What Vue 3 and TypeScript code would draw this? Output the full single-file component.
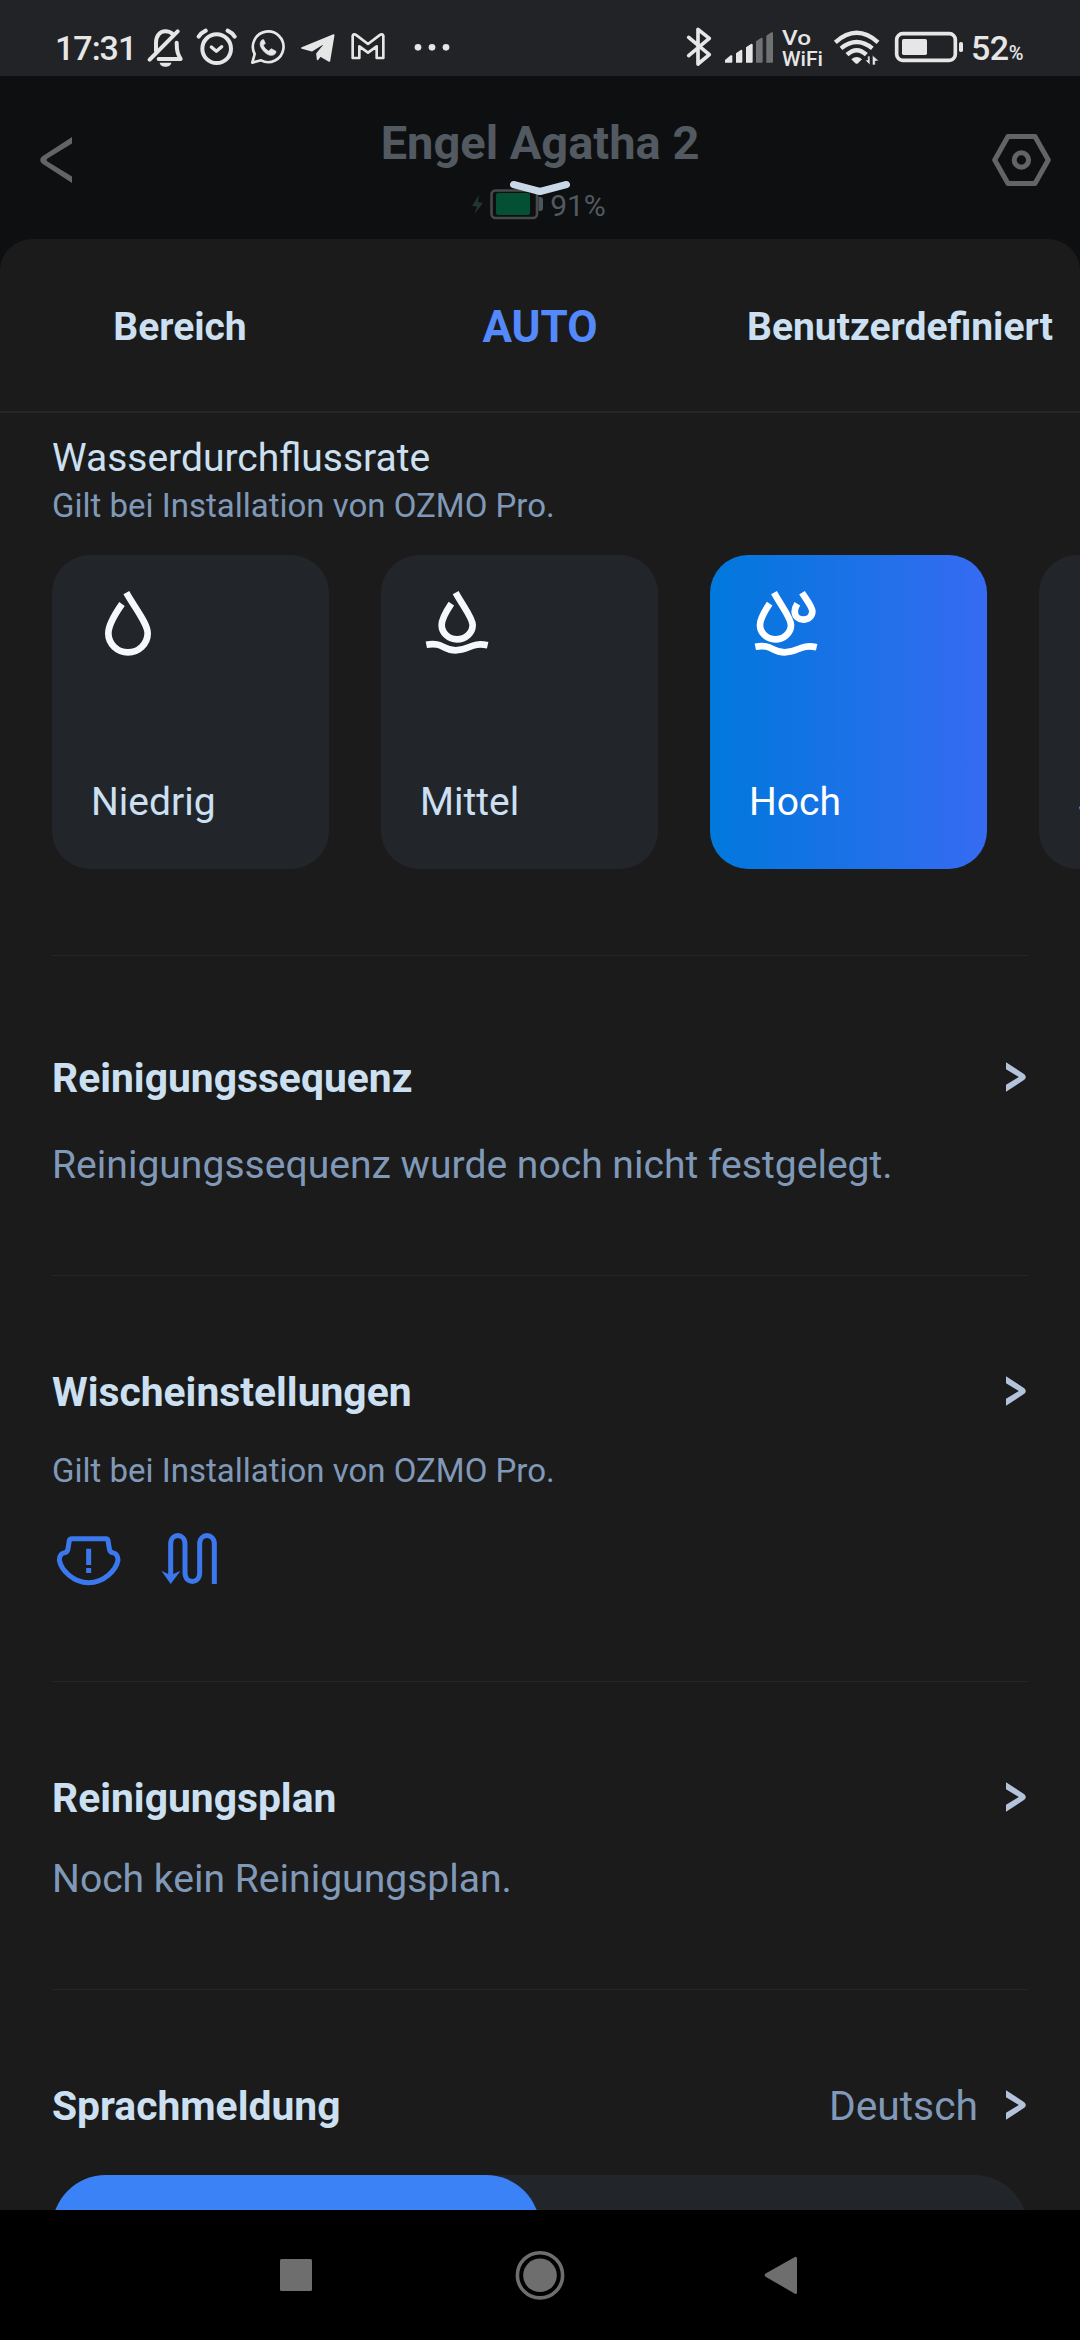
<script setup lang="ts">
interface Tab {
  label: string
  active?: boolean
}

interface WaterLevel {
  label: string
  viewBox: string
  paths: string[]
  active?: boolean
}

const tabs: Tab[] = [
  { label: 'Bereich' },
  { label: 'AUTO', active: true },
  { label: 'Benutzerdefiniert' },
]

const levels: WaterLevel[] = [
  {
    label: 'Niedrig',
    viewBox: '183 132 234 234',
    paths: ['M276 192C255 222 235 255 235 280C235 312 262 337 294 337C326 337 353 312 353 280C353 250 315 205 289 158'],
  },
  {
    label: 'Mittel',
    viewBox: '1170 132 234 234',
    paths: [
      'M1264 191C1248 215 1235 238 1235 255C1235 279 1256 298 1281 298C1306 298 1328 279 1328 255C1328 234 1300 200 1277 158',
      'M1189 314C1237 305 1240 331 1277 331C1317 331 1325 305 1373 316',
    ],
  },
  {
    label: 'Hoch',
    viewBox: '207 132 234 234',
    active: true,
    paths: [
      'M269 191C253 215 240 238 240 255C240 279 261 298 286 298C311 298 333 279 333 255C333 234 305 200 282 158',
      'M226 320C274 311 277 337 314 337C354 337 362 311 410 322',
      'M352 191C346 201 344 208 344 215C345 230 357 239 370 239C385 239 397 229 397 214C397 200 380 180 366 158',
    ],
  },
  { label: 'Sehr hoch', viewBox: '207 132 234 234', paths: [] },
]

const chevron = 'M2 .3L20.3 12.2Q23.3 15 20.3 17.8L2 29.7V22.8L14.8 15L2 7.2Z'
const volume = 50
</script>

<template>
  <div class="screen">
    <div class="status">
      <span class="clock">17:31</span>
      <svg class="bell" viewBox="321 84 111 120" width="37" height="40" fill="none" stroke="#e6e6e6" stroke-width="12" stroke-linecap="round">
        <path d="M348 152V128C348 108 359 94 376 94C386 94 393 97 399 103" />
        <path d="M410 128C410 155 414 163 422 177H356" stroke-linejoin="round" />
        <path d="M329 179L413 94" />
        <path d="M359 188H394C392 204 361 204 359 188Z" fill="#e6e6e6" stroke="none" />
      </svg>
      <svg class="alarm" viewBox="468 84 123 114" width="41" height="38" fill="none" stroke="#e6e6e6" stroke-width="12" stroke-linecap="round" stroke-linejoin="round">
        <circle cx="530" cy="146" r="43" />
        <path d="M514 141L529 154L545 140" stroke-width="10" />
        <path d="M476 110Q484 98 497 92M563 92Q576 98 584 110" />
      </svg>
      <svg class="whatsapp" viewBox="633 90 105 105" width="35" height="35">
        <path d="M637 188L644 162A46 46 0 1 1 663 181Z" fill="none" stroke="#e6e6e6" stroke-width="8" stroke-linejoin="round" />
        <path d="M667 119C660 124 658 134 664 144C672 157 684 167 695 166C703 166 709 159 708 154L694 146L686 153C678 149 673 143 670 136L676 130L671 119Z" fill="#e6e6e6" stroke="#e6e6e6" stroke-width="2" />
      </svg>
      <svg class="telegram" viewBox="780 96 108 96" width="36" height="32" fill="#e6e6e6" stroke="#e6e6e6" stroke-width="5" stroke-linejoin="round">
        <path d="M786 144L881 105L868 183L841 167L833 178L831 161L862 123L816 152Z" />
      </svg>
      <svg class="gmail" viewBox="930 96 108 87" width="36" height="29" fill="none" stroke="#e6e6e6" stroke-width="8" stroke-linejoin="round">
        <path d="M938 174V107Q941 100 950 106L984 132L1018 106Q1027 100 1030 107V174H1010V139L984 158L958 139V174Z" />
      </svg>
      <svg class="dots" viewBox="1119 126 114 30" width="38" height="10" fill="#e6e6e6">
        <circle cx="1134" cy="142" r="10" /><circle cx="1176" cy="142" r="10" /><circle cx="1218" cy="142" r="10" />
      </svg>

      <svg class="bluetooth" viewBox="48 78 78 123" width="26" height="41" fill="none" stroke="#e6e6e6" stroke-width="11" stroke-linecap="round" stroke-linejoin="round">
        <path d="M56 112L118 164L84 192V88L118 115L56 167" />
      </svg>
      <svg class="signal" viewBox="162 93 150 99" width="50" height="33" fill="#e6e6e6">
        <path d="M165 188V180L182 166Q187 164 187 169V185Q187 188 184 188Z" />
        <path d="M198 188V160L212 150Q217 148 217 153V185Q217 188 214 188Z" />
        <path d="M228 188V142L243 132Q248 130 248 135V185Q248 188 245 188Z" />
        <path d="M258 188V124L273 114Q278 112 278 117V185Q278 188 275 188Z" fill="#707173" />
        <path d="M289 188V107L304 97Q309 95 309 100V185Q309 188 306 188Z" fill="#707173" />
      </svg>
      <svg class="vowifi" viewBox="0 0 48 46" width="48" height="46">
        <text x="1" y="18" textLength="29" lengthAdjust="spacingAndGlyphs">Vo</text>
        <text x="1" y="39" textLength="41" lengthAdjust="spacingAndGlyphs">WiFi</text>
      </svg>
      <svg class="wifi" viewBox="489 87 144 114" width="48" height="38" fill="none" stroke="#e6e6e6" stroke-width="13">
        <path d="M496 127Q560 70 624 127" />
        <path d="M513 145Q560 107 607 145" />
        <path d="M531 164Q560 137 589 164" />
        <path d="M544 178Q560 164 576 178L564 190Q560 193 556 190Z" fill="#e6e6e6" stroke="none" />
        <path d="M600 168V195L585 180H593V168ZM607 195V165L627 183H616V195Z" fill="#e6e6e6" stroke="#222326" stroke-width="2" />
      </svg>
      <svg class="battery" viewBox="672 93 210 96" width="70" height="32">
        <rect x="680" y="101" width="176" height="80" rx="18" fill="none" stroke="#e6e6e6" stroke-width="11" />
        <rect x="696" y="117" width="75" height="48" rx="5" fill="#e6e6e6" />
        <rect x="867" y="126" width="12" height="30" rx="5" fill="#e6e6e6" />
      </svg>
      <span class="level">52<small>%</small></span>
    </div>

    <header class="header">
      <svg class="back" viewBox="0 0 32 46" width="32" height="46">
        <path d="M32 0V6.4L7.5 21.6Q5.6 23 7.5 24.4L32 39.6V46L2 26.5Q-1.6 23 2 19.5Z" fill="#646464" />
      </svg>
      <div class="device">
        <h1>Engel Agatha 2</h1>
        <div class="charge">
          <svg viewBox="471 188 73 36" width="73" height="36">
            <path d="M479 195L472 206L477 206.5L474.5 214L483 203L478 202Z" fill="#20372f" />
            <rect x="491.5" y="190.5" width="45.5" height="27.5" rx="4" fill="none" stroke="#47484b" stroke-width="2.6" />
            <rect x="496" y="193" width="34" height="22" rx="2" fill="#035034" />
            <path d="M538.5 197H540Q543 197 543 200V208Q543 211 540 211H538.5Z" fill="#4d555c" />
          </svg>
          <span>91%</span>
        </div>
      </div>
      <svg class="settings" viewBox="991 133 61 54" width="61" height="54" fill="none" stroke="#646464" stroke-width="5">
        <path d="M1008 136.5H1035L1048.3 160L1035 183.5H1008L994.7 160Z" stroke-linejoin="round" />
        <circle cx="1021.4" cy="160" r="7.2" />
      </svg>
      <svg class="handle" viewBox="0 0 64 20" width="64" height="20">
        <path d="M5.5 5.5L32 12.5L58.5 5.5" fill="none" stroke="#c9d8e7" stroke-width="7" stroke-linecap="round" stroke-linejoin="round" />
      </svg>
    </header>

    <main class="sheet">
      <nav class="tabs">
        <div v-for="tab in tabs" :key="tab.label" class="tab" :class="{ active: tab.active }">{{ tab.label }}</div>
      </nav>

      <section class="water">
        <h2>Wasserdurchflussrate</h2>
        <p class="note">Gilt bei Installation von OZMO Pro.</p>
        <div class="cards">
          <div v-for="level in levels" :key="level.label" class="card" :class="{ active: level.active }">
            <svg :viewBox="level.viewBox" width="78" height="78" fill="none" stroke-width="20">
              <path v-for="d in level.paths" :key="d" :d="d" />
            </svg>
            <span>{{ level.label }}</span>
          </div>
        </div>
      </section>

      <section class="sequence">
        <div class="row">
          <h3>Reinigungssequenz</h3>
          <svg viewBox="0 0 24 32" width="24" height="32"><path :d="chevron" /></svg>
        </div>
        <p class="hint">Reinigungssequenz wurde noch nicht festgelegt.</p>
      </section>

      <section class="mop">
        <div class="row">
          <h3>Wischeinstellungen</h3>
          <svg viewBox="0 0 24 32" width="24" height="32"><path :d="chevron" /></svg>
        </div>
        <p class="note">Gilt bei Installation von OZMO Pro.</p>
        <div class="modes">
          <svg viewBox="66 480 216 180" width="72" height="60" fill="none" stroke="#3b78ee" stroke-width="15" stroke-linejoin="round">
            <path d="M126 506H228Q233 506 234 511L238 536Q239 546 248 548Q264 551 264 570C259 600 222 638 176 638C130 638 93 600 88 570Q88 551 104 548Q113 546 114 536L118 511Q119 506 126 506Z" />
            <path d="M176 536V585M176 594V609" />
          </svg>
          <svg viewBox="390 480 180 180" width="60" height="60" fill="none" stroke="#3b78ee" stroke-width="15">
            <path d="M422 625V522C422 488 465 488 465 522V608C465 643 509 643 509 608V522C509 488 553 488 553 522V642" />
            <path d="M394 602L422 642L452 602L422 616Z" fill="#3b78ee" stroke="none" />
          </svg>
        </div>
      </section>

      <section class="plan">
        <div class="row">
          <h3>Reinigungsplan</h3>
          <svg viewBox="0 0 24 32" width="24" height="32"><path :d="chevron" /></svg>
        </div>
        <p class="hint">Noch kein Reinigungsplan.</p>
      </section>

      <section class="voice">
        <div class="row">
          <h3>Sprachmeldung</h3>
          <span class="value">Deutsch</span>
          <svg viewBox="0 0 24 32" width="24" height="32"><path :d="chevron" /></svg>
        </div>
        <div class="slider"><div class="fill" :style="{ width: volume + '%' }"></div></div>
      </section>
    </main>

    <footer class="navbar">
      <svg viewBox="0 0 60 60" width="60" height="60"><rect x="14" y="14" width="32" height="32" rx="1.5" /></svg>
      <svg viewBox="0 0 60 60" width="60" height="60">
        <circle cx="30" cy="30.3" r="22.6" fill="none" stroke="#6e6e6e" stroke-width="3.6" />
        <circle cx="30" cy="30.3" r="16.8" />
      </svg>
      <svg viewBox="0 0 60 60" width="60" height="60"><path d="M11.6 28.6L40.5 12.2Q43 11 43 13.5V47.3Q43 49.8 40.5 48.4L11.6 31.8Q9.6 30.2 11.6 28.6Z" /></svg>
    </footer>
  </div>
</template>

<style>
body {
  margin: 0;
  background: #000;
}
</style>

<style scoped>
.screen {
  width: 1080px;
  height: 2340px;
  display: flex;
  flex-direction: column;
  overflow: hidden;
  background: #0e0f11;
  font-family: Roboto, "Liberation Sans", sans-serif;
}

h1, h2, h3, p {
  margin: 0;
}

svg {
  display: block;
  flex: none;
}

.status {
  height: 76px;
  flex: none;
  display: flex;
  align-items: flex-start;
  background: #222326;
  color: #e6e6e6;
}

.clock {
  width: 92px;
  margin: 28px 0 0 55px;
  font-size: 34px;
  line-height: 40px;
  font-weight: 500;
  letter-spacing: -1px;
  white-space: nowrap;
}

.bell { margin-top: 28px; }
.alarm { margin: 28px 0 0 12px; }
.whatsapp { margin: 30px 0 0 14px; }
.telegram { margin: 32px 0 0 14px; }
.gmail { margin: 32px 0 0 14px; }
.dots { margin: 42px 0 0 27px; }
.bluetooth { margin: 26px 0 0 235px; }
.signal { margin: 31px 0 0 12px; }
.vowifi { margin: 27px 0 0 7px; }
.wifi { margin: 29px 0 0 4px; }
.battery { margin: 31px 0 0 13px; }

.vowifi text {
  font: 500 21px Roboto, sans-serif;
  fill: #e6e6e6;
}

.level {
  margin: 28px 0 0 7px;
  font-size: 34px;
  line-height: 40px;
  font-weight: 500;
  letter-spacing: -0.5px;
  white-space: nowrap;
}

.level small {
  font-size: 20px;
  line-height: 20px;
}

.header {
  height: 163px;
  flex: none;
  position: relative;
  display: flex;
  justify-content: space-between;
  align-items: flex-start;
}

.back { margin: 61px 0 0 40px; }
.settings { margin: 57px 28px 0 0; }

.device {
  width: 400px;
  margin: 37px 0 0 17px;
  color: #525960;
}

.device h1 {
  font-size: 47px;
  line-height: 60px;
  font-weight: 700;
  text-align: center;
  white-space: nowrap;
}

.charge {
  display: flex;
  justify-content: center;
  gap: 6px;
  margin-top: 15px;
  padding-right: 3px;
  font-size: 30px;
  line-height: 36px;
}

.handle {
  position: absolute;
  left: 508px;
  top: 103px;
}

.sheet {
  height: 1971px;
  flex: none;
  overflow: hidden;
  border-radius: 32px 32px 0 0;
  background: #1b1b1b;
}

.tabs {
  box-sizing: border-box;
  height: 174px;
  padding-top: 4px;
  display: grid;
  grid-template-columns: repeat(3, 360px);
  border-bottom: 2px solid #262626;
}

.tab {
  display: flex;
  align-items: center;
  justify-content: center;
  font-size: 39px;
  font-weight: 700;
  color: #cce0f2;
  white-space: nowrap;
}

.tab.active {
  font-size: 44px;
  color: #5489fb;
}

section {
  margin: 0 52px;
  border-bottom: 1px solid #262626;
}

.water { padding: 21px 0 86px; }
.sequence { padding: 92px 0 84px; }
.mop { padding: 86px 0 91px; }
.plan { padding: 86px 0 84px; }
.voice { padding-top: 86px; border: 0; }

h2 {
  font-size: 39px;
  line-height: 48px;
  font-weight: 400;
  color: #cce0f2;
}

.note {
  font-size: 33px;
  line-height: 48px;
  color: #8199b8;
}

.cards {
  display: flex;
  gap: 52px;
  width: 1028px;
  margin-top: 25px;
  overflow: hidden;
}

.card {
  box-sizing: border-box;
  width: 277px;
  height: 314px;
  flex: none;
  padding: 29px 0 41px 39px;
  display: flex;
  flex-direction: column;
  justify-content: space-between;
  border-radius: 38px;
  background: #22262b;
  color: #cce0f2;
  font-size: 39px;
  line-height: 52px;
}

.card svg { stroke: #f5f9fd; }

.card.active {
  background: linear-gradient(90deg, #0078dc, #366bf2);
  color: #fff;
}

.card.active svg { stroke: #fff; }

.row {
  display: flex;
  align-items: center;
  height: 60px;
}

.row h3 {
  flex: 1;
  font-size: 40.8px;
  line-height: 60px;
  font-weight: 700;
  color: #cce0f2;
}

.row svg { fill: #b4c3dc; }

.value {
  margin-right: 26px;
  font-size: 40.8px;
  line-height: 60px;
  color: #8199b8;
}

.hint {
  font-size: 39.1px;
  line-height: 52px;
  color: #8199b8;
}

.sequence .hint { margin-top: 31px; }
.plan .hint { margin-top: 25px; }
.mop .note { margin-top: 25px; }

.modes {
  display: flex;
  gap: 36px;
  margin-top: 35px;
}

.slider {
  height: 108px;
  margin-top: 39px;
  border-radius: 54px;
  background: #22262b;
}

.fill {
  height: 108px;
  border-radius: 54px;
  background: #3b82f7;
}

.navbar {
  height: 130px;
  flex: none;
  box-sizing: border-box;
  padding: 35px 0 0 266px;
  display: flex;
  gap: 184px;
  background: #000;
  fill: #6e6e6e;
}
</style>
